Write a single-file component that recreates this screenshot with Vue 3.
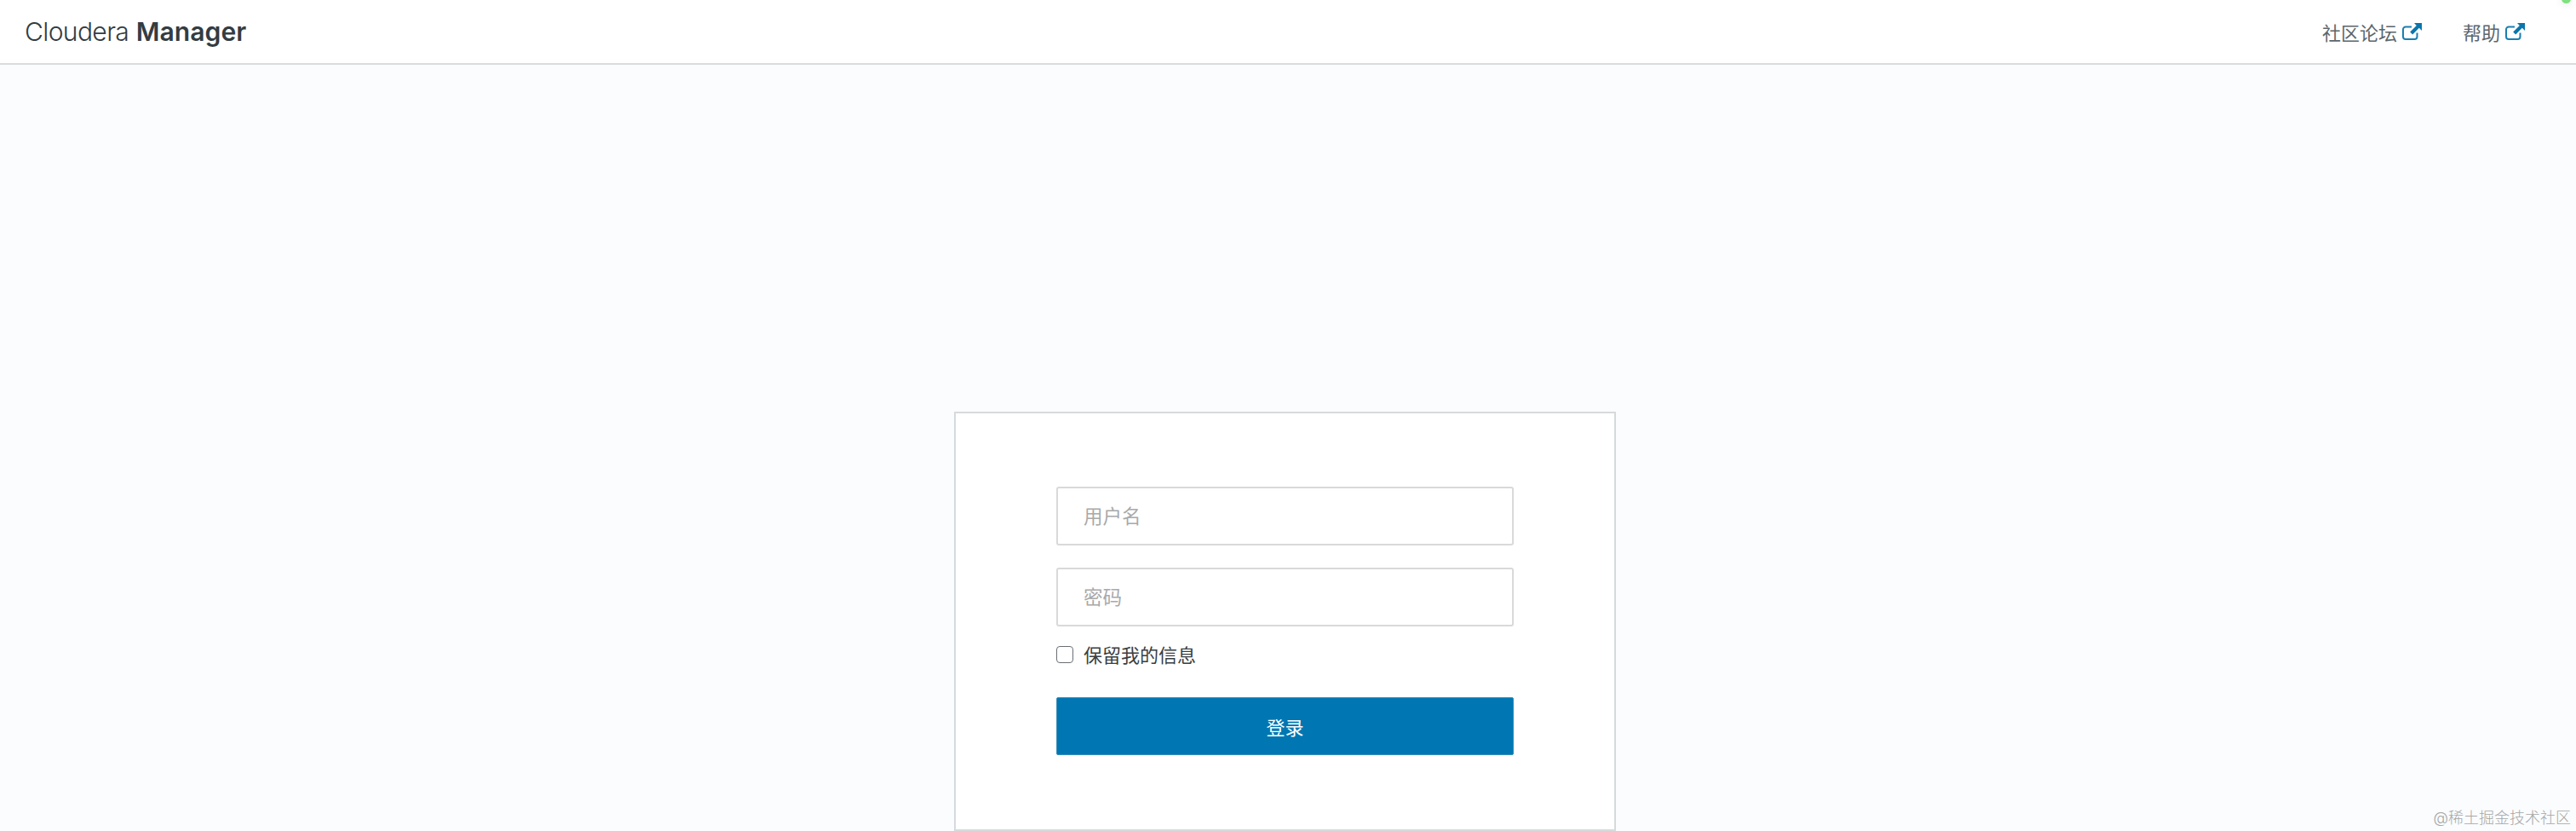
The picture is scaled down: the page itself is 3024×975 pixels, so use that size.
<script setup>
const links = [
  { label: '社区论坛' },
  { label: '帮助' }
]
</script>

<template>
  <div class="page">
    <header class="topbar">
      <div class="brand"><span class="brand-light">Cloudera</span> <strong>Manager</strong></div>
      <nav class="links">
        <a v-for="link in links" :key="link.label" class="link" href="#">
          <span>{{ link.label }}</span>
          <svg class="ext" viewBox="0 0 23 20" aria-hidden="true">
            <path d="M17.5 11.5v4.5a3 3 0 0 1-3 3H4a3 3 0 0 1-3-3V7.5a3 3 0 0 1 3-3h7" fill="none" stroke="#1a7fb0" stroke-width="2" />
            <path d="M14 0H23V9l-3.2-3.2-7.6 7.7-3-3L16.800 3z" fill="#0a76ab" />
          </svg>
        </a>
      </nav>
      <span class="status-dot"></span>
    </header>
    <main class="main">
      <form class="card" @submit.prevent>
        <input class="field" type="text" placeholder="用户名" />
        <input class="field second" type="password" placeholder="密码" />
        <label class="remember">
          <input class="check" type="checkbox" />
          <span class="remember-text">保留我的信息</span>
        </label>
        <button class="submit" type="submit">登录</button>
      </form>
    </main>
    <div class="watermark">@稀土掘金技术社区</div>
  </div>
</template>

<style>
html, body { margin: 0; height: 100%; overflow: hidden; }
</style>

<style scoped>
.page {
  position: relative;
  height: 975px;
  overflow: hidden;
  display: flex;
  flex-direction: column;
  background: #fafcfe;
  font-family: Inter, "Noto Sans CJK SC", sans-serif;
  color: #333c42;
}
.topbar {
  position: relative;
  flex: none;
  height: 74px;
  display: flex;
  align-items: center;
  justify-content: space-between;
  padding: 0 60px 0 29px;
  background: #fff;
  border-bottom: 2px solid #d9dcdc;
}
.brand {
  font-size: 30px;
  font-weight: 300;
  color: #333c42;
}
.brand-light {
  font-weight: 300;
  letter-spacing: -0.6px;
}
.brand strong { font-weight: 600; letter-spacing: 0.1px; }
.links { display: flex; gap: 48px; }
.link {
  display: flex;
  align-items: center;
  gap: 6px;
  font-size: 22px;
  color: #5c666c;
  text-decoration: none;
}
.ext { width: 23px; height: 20px; margin-top: -1px; }
.status-dot {
  position: absolute;
  top: -7px;
  right: 6px;
  width: 11px;
  height: 11px;
  border-radius: 50%;
  background: #7fe07f;
  box-shadow: 0 2px 10px rgba(0, 0, 0, 0.1);
}
.main {
  flex: 1;
  display: flex;
  justify-content: center;
  padding: 407px 7px 0 0;
}
.card {
  box-sizing: border-box;
  width: 777px;
  height: 492px;
  flex: none;
  padding: 86px 118px 0;
  display: flex;
  flex-direction: column;
  background: #fff;
  border: 2px solid #d6dadb;
}
.field {
  box-sizing: border-box;
  width: 100%;
  height: 69px;
  padding: 0 30px 3px;
  background: #fff;
  border: 2px solid #d9d9d9;
  border-radius: 3px;
  outline: none;
  font: 22.5px "Noto Sans CJK SC", sans-serif;
  color: #333;
}
.field::placeholder { color: #a9a9a9; opacity: 1; }
.second { margin-top: 26px; }
.remember {
  display: flex;
  align-items: center;
  gap: 12px;
  margin-top: 22px;
  height: 22px;
  font-size: 22px;
  color: #3a3f42;
}
.remember-text { margin-top: -3px; }
.check {
  appearance: none;
  box-sizing: border-box;
  width: 20px;
  height: 20px;
  margin: 0;
  background: #fff;
  border: 1.5px solid #6a6f73;
  border-radius: 4px;
}
.submit {
  box-sizing: border-box;
  width: 100%;
  height: 68px;
  margin-top: 39px;
  background: #0077b3;
  border: 1px solid #3a8fbb;
  border-radius: 2px;
  color: #fff;
  font: 22px "Noto Sans CJK SC", sans-serif;
}
.watermark {
  position: absolute;
  right: 6px;
  bottom: 3px;
  font-size: 18px;
  line-height: 24px;
  font-weight: 300;
  color: #a6a6a6;
}
</style>
